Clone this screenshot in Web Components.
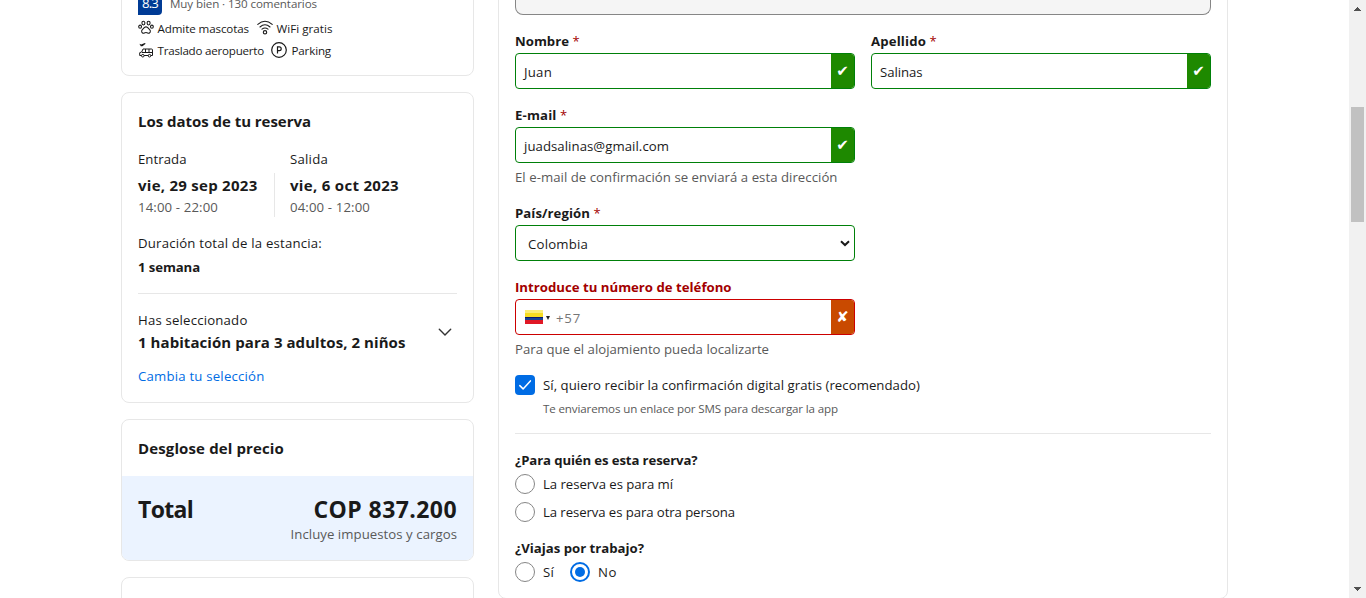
<!DOCTYPE html>
<html lang="es">
<head>
<meta charset="utf-8">
<title>Tus datos</title>
<style>
html,body{margin:0;height:598px;overflow:hidden;background:#fff;font-family:"Open Sans","Noto Sans",sans-serif;color:#1a1a1a}
</style>
</head>
<body>
<booking-page></booking-page>
<script>
const define = (name, html, setup) => {
  const template = document.createElement('template');
  template.innerHTML = html;
  customElements.define(name, class extends HTMLElement {
    connectedCallback() {
      if (this.shadowRoot) return;
      this.attachShadow({mode: 'open'}).append(template.content.cloneNode(true));
      if (setup) setup(this, this.shadowRoot);
    }
  });
};

/* One line of text; "w" is the width its letters are tracked to. */
define('ui-text', `<style>
:host{display:block;white-space:nowrap;font-size:13.2px;line-height:20px;flex:none}
:host([kind=small]){font-size:11.6px}
:host([kind=strong]){font-weight:700}
:host([kind=medium]){font-weight:500}
:host([kind=title]){font-size:15px;font-weight:700;line-height:24px}
:host([kind=total]){font-size:23px;font-weight:700;line-height:32px}
:host([tone=muted]){color:#595959}
:host([tone=link]){color:#006ce4}
:host([tone=error]){color:#a30000}
span{display:inline-block}
</style><span><slot></slot></span>`, (el, root) => {
  const span = root.querySelector('span');
  const w = parseFloat(el.getAttribute('w'));
  if (!w) return;
  const fit = () => {
    span.style.letterSpacing = '0px';
    const natural = span.getBoundingClientRect().width;
    const n = el.textContent.length;
    if (natural) span.style.letterSpacing = ((w - natural) / n) + 'px';
  };
  fit();
  queueMicrotask(fit);
});

define('ui-card', `<style>
:host{display:block;box-sizing:border-box;border:1px solid #e7e7e7;border-radius:8px;background:#fff;padding:0 16px;flex:none;overflow:hidden}
</style><slot></slot>`);

define('ui-rule', `<style>:host{display:block;height:1px;background:#e7e7e7}</style>`);

const ICONS = {
  paw: `<g fill="none" stroke="#1a1a1a" stroke-width="1.1"><ellipse cx="5.4" cy="3.1" rx="1.5" ry="1.9"/><ellipse cx="10.6" cy="3.1" rx="1.5" ry="1.9"/><ellipse cx="2.1" cy="6.7" rx="1.4" ry="1.6"/><ellipse cx="13.9" cy="6.7" rx="1.4" ry="1.6"/><path d="M8 6.9c-1.6 0-2.2 1.3-3.2 2.3-1 .9-1.4 1.6-1.1 2.7.4 1.3 1.7 1.6 2.6 1.1 1.1-.6 2.3-.6 3.4 0 .9.5 2.2.2 2.6-1.1.3-1.1-.1-1.8-1.1-2.7-1-1-1.600-2.300-3.200-2.300z"/></g>`,
  wifi: `<g fill="none" stroke="#1a1a1a" stroke-width="1.1" stroke-linecap="round"><path d="M.8 4.400Q8-1.800 15.200 4.400M3 7Q8 2.600 13 7M5 9.200Q8 6.700 11 9.200"/><circle cx="8" cy="12.300" r="1.700"/></g>`,
  shuttle: `<g fill="none" stroke="#1a1a1a" stroke-width="1"><path d="M5 7h8.500q1 0 1 1v5.500H1.700v-2.800l2-.7zM4 10.500h10.500M7.500 7v3.500M11 7v3.500"/><circle cx="4.800" cy="13.700" r="1.300" fill="#fff"/><circle cx="11.500" cy="13.700" r="1.300" fill="#fff"/></g><path d="M1.400 1.700l1.800.900L6.800 1l.9.700-3.300 2.500H2.800z" fill="#1a1a1a"/>`,
  parking: `<circle cx="8" cy="8" r="7.300" fill="none" stroke="#1a1a1a" stroke-width="1.200"/><path d="M6.500 11.500v-6.700h1.800a1.800 1.800 0 010 3.800H6.500" fill="none" stroke="#1a1a1a" stroke-width="1.200"/>`
};
define('facility-item', `<style>
:host{display:flex;align-items:center;gap:3.500px;height:22px}
svg{display:block;width:16px;height:16px;margin-bottom:2px}
</style><svg viewBox="0 0 16 16"></svg><slot></slot>`, (el, root) => {
  root.querySelector('svg').innerHTML = ICONS[el.getAttribute('icon')];
});

define('hotel-card', `<style>
:host{display:block}
ui-card{height:96px}
.score{display:flex;gap:8px;margin-top:10px;height:24px}
.badge{width:24px;height:24px;background:#003b95;color:#fff;border-radius:0 0 4px 0;display:flex;justify-content:center}
.score>ui-text{padding-top:3px}
.row{display:flex;height:22px}
.rows{padding-top:3px}
</style><ui-card>
<div class="score"><div class="badge"><ui-text kind="medium" w="16" style="padding-top:2px">8.3</ui-text></div><ui-text kind="small" tone="muted" w="147">Muy bien · 130 comentarios</ui-text></div>
<div class="rows">
<div class="row" style="gap:8px"><facility-item icon="paw"><ui-text kind="small" w="91.500">Admite mascotas</ui-text></facility-item><facility-item icon="wifi"><ui-text kind="small" w="56">WiFi gratis</ui-text></facility-item></div>
<div class="row" style="gap:7px"><facility-item icon="shuttle"><ui-text kind="small" w="106.500">Traslado aeropuerto</ui-text></facility-item><facility-item icon="parking" style="gap:4.500px"><ui-text kind="small" w="39.500">Parking</ui-text></facility-item></div>
</div></ui-card>`);

define('stay-card', `<style>
:host{display:block}
ui-card{height:311px}
.title{margin-top:16px}
.dates{display:flex;margin-top:16px}
.col{width:136px}
.col+.vr+.col{padding-left:16px}
.vr{width:1px;height:44px;background:#e7e7e7;margin:24px -1px 0 0}
.sel{display:flex;justify-content:space-between;align-items:center;margin-top:16px}
svg{width:24px;height:24px;margin-bottom:1px}
</style><ui-card>
<ui-text class="title" kind="title" w="173">Los datos de tu reserva</ui-text>
<div class="dates">
<div class="col"><ui-text kind="medium" w="48.500">Entrada</ui-text><ui-text kind="title" w="119.500" style="margin-top:4px">vie, 29 sep 2023</ui-text><ui-text tone="muted" w="80">14:00 - 22:00</ui-text></div>
<div class="vr"></div>
<div class="col"><ui-text kind="medium" w="38">Salida</ui-text><ui-text kind="title" w="109" style="margin-top:4px">vie, 6 oct 2023</ui-text><ui-text tone="muted" w="80">04:00 - 12:00</ui-text></div>
</div>
<ui-text kind="medium" w="184" style="margin-top:16px">Duración total de la estancia:</ui-text>
<ui-text kind="strong" w="62" style="margin-top:4px">1 semana</ui-text>
<ui-rule style="margin-top:16px"></ui-rule>
<div class="sel"><div><ui-text kind="medium" w="109.500">Has seleccionado</ui-text><ui-text kind="title" w="267.500">1 habitación para 3 adultos, 2 niños</ui-text></div>
<svg viewBox="0 0 24 24"><path d="M6.300 9.300l5.700 5.700 5.700-5.700" fill="none" stroke="#333" stroke-width="1.400" stroke-linecap="round"/></svg></div>
<ui-text kind="medium" tone="link" w="126.500" style="margin-top:12px">Cambia tu selección</ui-text>
</ui-card>`);

define('price-card', `<style>
:host{display:block}
ui-card{height:142px}
.total{display:flex;justify-content:space-between;background:#ebf3ff;height:84px;margin:16px -16px 0;padding:17px 16px 0;box-sizing:border-box}
.sum{display:flex;flex-direction:column;align-items:flex-end}
</style><ui-card>
<ui-text kind="title" w="146" style="margin-top:16px">Desglose del precio</ui-text>
<div class="total"><ui-text kind="total" w="55">Total</ui-text>
<div class="sum"><ui-text kind="total" w="143.500">COP 837.200</ui-text><ui-text tone="muted" w="166.500" style="margin-top:-1px">Incluye impuestos y cargos</ui-text></div></div>
</ui-card>`);

/* Bordered control with an optional validation mark on the right. */
define('form-field', `<style>
:host{display:block;width:340px;flex:none}
.box{display:flex;justify-content:space-between;box-sizing:border-box;height:36px;border:1px solid #008009;border-radius:4px;background:#fff;margin-top:2px;overflow:hidden}
:host([state=error]) .box{border-color:#c00}
.value{display:flex;align-items:center;padding:2px 0 0 8px}
.mark{width:23px;background:#1e8900;color:#fff;font:15px/35px "DejaVu Sans",sans-serif;text-align:center}
:host([state=error]) .mark{background:#c94a00}
:host([state=select]) .mark{background:none;width:18px}
svg{display:block;margin:14px 0 0 4px}
</style><slot name="label"></slot><div class="box"><div class="value"><slot></slot></div><div class="mark"></div></div><slot name="hint"></slot>`, (el, root) => {
  const mark = root.querySelector('.mark'), state = el.getAttribute('state');
  if (state === 'select') mark.innerHTML = '<svg width="10" height="8" viewBox="0 0 10 8"><path d="M1 1.200l4 3.800 4-3.800" fill="none" stroke="#1a1a1a" stroke-width="2"/></svg>';
  else mark.textContent = state === 'error' ? '✘' : '✔';
});

define('field-label', `<style>:host{display:flex;gap:3.500px}i{font:400 13px/20px "Open Sans";color:#a30000}</style><slot></slot><i>*</i>`);

define('country-flag', `<style>
:host{display:flex;align-items:center;margin:-2px 6px 0 1px;gap:3px}
.f{width:18px;height:14px;background:linear-gradient(#fbee78 0 3px,#f7dd22 3px 7px,#0a1a72 7px 8px,#174395 8px 10px,#e01825 10px)}
.a{border:solid transparent;border-width:4px 2.500px 0;border-top-color:#222;width:0;height:0;margin-top:2px}
</style><div class="f"></div><div class="a"></div>`);

define('choice-option', `<style>
:host{display:flex;gap:8px;height:20px;align-items:center}
.c{width:20px;height:20px;box-sizing:border-box;border:1px solid #868686;border-radius:50%;flex:none;display:grid;place-items:center}
:host([on]) .c{border:2px solid #006ce4}
:host([on]) .c::after{content:"";width:10px;height:10px;border-radius:50%;background:#006ce4;grid-area:1/1}
:host([check]) .c{border:0;background:#006ce4;border-radius:4px}
svg{display:none}:host([check]) svg{display:block}
</style><div class="c"><svg width="20" height="20" viewBox="0 0 20 20"><path d="M4.800 10.600l3.300 3.300 7.300-8" fill="none" stroke="#fff" stroke-width="1.500" stroke-linecap="round" stroke-linejoin="round"/></svg></div><slot></slot>`);

define('guest-form', `<style>
:host{display:block}
ui-card{height:619px}
.panel{height:34px;box-sizing:border-box;border:1px solid #868686;border-top:0;border-radius:0 0 8px 8px;background:#f5f5f5}
.pair{display:flex;gap:16px;margin-top:16px}
.inline{display:flex;gap:16px;margin-top:4px}
</style><ui-card>
<div class="panel"></div>
<div class="pair">
<form-field><field-label slot="label"><ui-text kind="strong" w="54">Nombre</ui-text></field-label><ui-text w="28">Juan</ui-text></form-field>
<form-field><field-label slot="label"><ui-text kind="strong" w="55">Apellido</ui-text></field-label><ui-text w="42.500">Salinas</ui-text></form-field>
</div>
<form-field style="margin-top:16px"><field-label slot="label"><ui-text kind="strong" w="41.500">E-mail</ui-text></field-label><ui-text w="145">juadsalinas@gmail.com</ui-text><ui-text slot="hint" tone="muted" w="322.500" style="margin-top:4px">El e-mail de confirmación se enviará a esta dirección</ui-text></form-field>
<form-field state="select" style="margin-top:16px"><field-label slot="label"><ui-text kind="strong" w="75">País/región</ui-text></field-label><ui-text w="60" style="margin-left:4px">Colombia</ui-text></form-field>
<form-field state="error" style="margin-top:16px"><ui-text slot="label" kind="strong" tone="error" w="216.500">Introduce tu número de teléfono</ui-text><country-flag></country-flag><ui-text w="25" style="color:#767676">+57</ui-text><ui-text slot="hint" tone="muted" w="254" style="margin-top:4px">Para que el alojamiento pueda localizarte</ui-text></form-field>
<choice-option check style="margin-top:16px"><ui-text w="377">Sí, quiero recibir la confirmación digital gratis (recomendado)</ui-text></choice-option>
<ui-text kind="small" tone="muted" w="295" style="margin:4px 0 0 28px">Te enviaremos un enlace por SMS para descargar la app</ui-text>
<ui-rule style="margin-top:14px"></ui-rule>
<ui-text kind="strong" w="182.500" style="margin-top:16px">¿Para quién es esta reserva?</ui-text>
<choice-option style="margin-top:4px"><ui-text w="130">La reserva es para mí</ui-text></choice-option>
<choice-option style="margin-top:8px"><ui-text w="192">La reserva es para otra persona</ui-text></choice-option>
<ui-text kind="strong" w="129" style="margin-top:16px">¿Viajas por trabajo?</ui-text>
<div class="inline"><choice-option><ui-text w="11">Sí</ui-text></choice-option><choice-option on><ui-text w="19">No</ui-text></choice-option></div>
</ui-card>`);

define('scroll-bar', `<style>
:host{display:flex;flex-direction:column;align-items:center;width:17px;height:598px;background:#f1f1f1;box-sizing:border-box;padding:7px 0}
.up,.dn{width:7px;height:4px;background:#505050;clip-path:polygon(3px 0,4px 0,4px 1px,5px 1px,5px 2px,6px 2px,6px 3px,7px 3px,7px 4px,0 4px,0 3px,1px 3px,1px 2px,2px 2px,2px 1px,3px 1px)}
.dn{transform:scaleY(-1);margin-top:auto}
.thumb{width:13px;height:115px;margin-top:96px;background:#c1c1c1}
</style><div class="up"></div><div class="thumb"></div><div class="dn"></div>`);

define('booking-page', `<style>
:host{display:flex;justify-content:space-between;height:598px;overflow:hidden}
main{display:flex;gap:24px;padding-left:121px;margin-top:-20px;align-items:flex-start}
aside{width:353px;display:flex;flex-direction:column;gap:16px}
guest-form{width:730px}
</style><main><aside><hotel-card></hotel-card><stay-card></stay-card><price-card></price-card><ui-card style="height:80px"></ui-card></aside><guest-form></guest-form></main><scroll-bar></scroll-bar>`);
</script>
</body>
</html>
